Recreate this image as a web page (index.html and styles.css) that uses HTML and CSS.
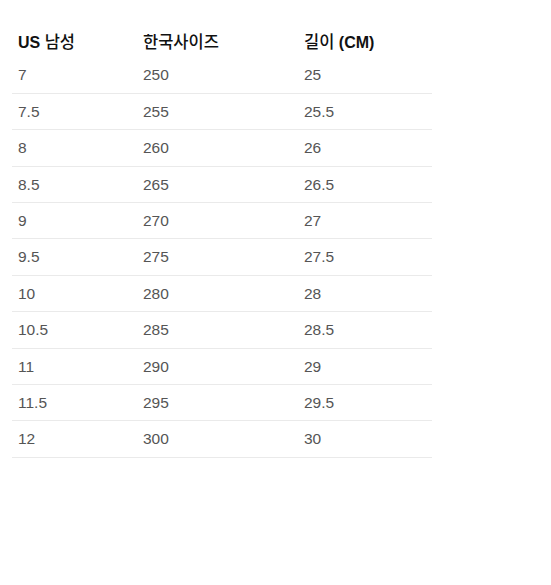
FILE: index.html
```html
<!DOCTYPE html>
<html lang="ko">
<head>
<meta charset="utf-8">
<link rel="stylesheet" href="styles.css">
</head>
<body>
<div class="wrap">
<table class="size-table">
  <colgroup><col class="c1"><col class="c2"><col class="c3"></colgroup>
  <thead>
    <tr><th>US <span class="ko">남성</span></th><th><span class="ko">한국사이즈</span></th><th><span class="ko">길이</span> (CM)</th></tr>
  </thead>
  <tbody>
    <tr><td>7</td><td>250</td><td>25</td></tr>
    <tr><td>7.5</td><td>255</td><td>25.5</td></tr>
    <tr><td>8</td><td>260</td><td>26</td></tr>
    <tr><td>8.5</td><td>265</td><td>26.5</td></tr>
    <tr><td>9</td><td>270</td><td>27</td></tr>
    <tr><td>9.5</td><td>275</td><td>27.5</td></tr>
    <tr><td>10</td><td>280</td><td>28</td></tr>
    <tr><td>10.5</td><td>285</td><td>28.5</td></tr>
    <tr><td>11</td><td>290</td><td>29</td></tr>
    <tr><td>11.5</td><td>295</td><td>29.5</td></tr>
    <tr><td>12</td><td>300</td><td>30</td></tr>
  </tbody>
</table>
</div>
</body>
</html>
```
FILE: styles.css
```css
html, body {
  margin: 0;
  padding: 0;
  background: #fff;
}
.wrap {
  padding: 28px 0 0 12px;
}
.size-table {
  border-collapse: collapse;
  table-layout: fixed;
  width: 420px;
  font-family: "Liberation Sans", Arial, "Noto Sans CJK KR", sans-serif;
  font-size: 15.5px;
  line-height: 19.4px;
}
.c1 { width: 125px; }
.c2 { width: 161px; }
.c3 { width: 134px; }
.size-table th {
  text-align: left;
  font-weight: bold;
  font-size: 16px;
  color: #111;
  padding: 5px 6px;
  height: 19.4px;
  line-height: 19.4px;
}
.size-table th .ko {
  font-family: "Noto Sans CJK KR", sans-serif;
  font-size: 16.5px;
  font-weight: 500;
  line-height: 1;
}
.size-table td {
  color: #555;
  padding: 8px 6px;
  border-bottom: 1px solid #eaeaea;
}
```
